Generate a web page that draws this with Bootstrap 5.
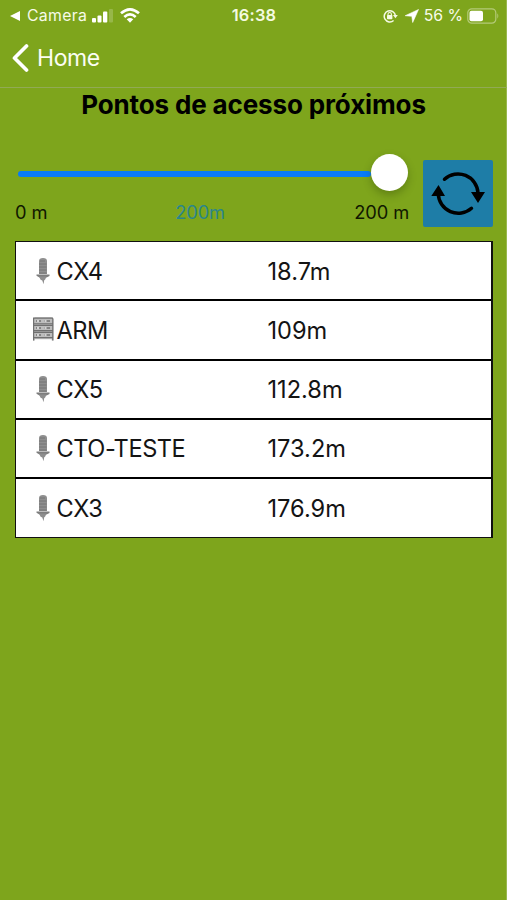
<!DOCTYPE html>
<html lang="pt">
<head>
<meta charset="utf-8">
<meta name="viewport" content="width=device-width, initial-scale=1">
<title>Pontos de acesso próximos</title>
<link href="https://cdn.jsdelivr.net/npm/bootstrap@5.3.0/dist/css/bootstrap.min.css" rel="stylesheet">
<style>
body{background:#7ea51c;font-family:Inter,"Liberation Sans",sans-serif;color:#000;height:900px;overflow:hidden;box-shadow:inset -1px 0 #98b74e}
svg{display:block;flex:none}
.status{height:30px;padding:0 8px 0 9px;color:#f7fbe9;font-size:15.8px;line-height:30px;display:grid;grid-template-columns:1fr auto 1fr}
.status .cam{letter-spacing:.3px;margin-left:7px}
.status .clock{font-weight:600;font-size:16.4px;letter-spacing:.2px;color:#f4fae0}
.status .cam,.status .pct{padding-top:1px}
.topnav{height:58px;border-bottom:1px solid #91aa55;padding:0 0 1px 11px;color:#fbfdf3;font-size:23px}
.topnav a{letter-spacing:-.45px;margin-left:8px;line-height:1}
h1{font-size:26px;font-weight:700;line-height:33px;letter-spacing:-.13px;margin:0;height:72px;white-space:nowrap}
.controls{padding:0 14px 0 15px;height:67px}
.slider{width:395px;margin-right:14px}
.rail{height:27px;padding-left:3px}
.rail-line{height:6px;background:#087cf8;border-radius:3px}
.knob{width:37px;height:37px;flex:none;border-radius:50%;background:#fff;box-shadow:0 4px 9px rgba(30,45,0,.3);margin:-3px 1px 0 0}
.scale{font-size:18.3px;line-height:22px;margin-top:14px;letter-spacing:-.1px;color:#101800;display:grid;grid-template-columns:1fr auto 1fr}
.scale .current{color:#2a868c;margin-left:-24px}
.refresh{width:70px;height:67px;background:#1e7da7;border:0;border-radius:2px;padding:0}
.points{margin:14px 14px 0 15px;border:1px solid #101010;border-right-width:2px;background:#fff}
.point{height:59.25px;border-bottom:2px solid #000;padding:1px 0 0 14.500px;font-size:23.6px;line-height:1;color:#141414}
.point:first-child{padding-top:2px}
.point:last-child{border-bottom:0;height:58.25px}
.point .name{width:237px}
.point .label{margin-left:2px;letter-spacing:-.45px}
</style>
<script src="https://cdn.jsdelivr.net/npm/bootstrap@5.3.0/dist/js/bootstrap.bundle.min.js"></script>
</head>
<body>
<svg width="0" height="0" class="position-absolute" aria-hidden="true">
<defs>
<symbol id="closure" viewBox="0 2 24 28">
<path d="M8 18V5q0-3 4-3T16 5v13z" fill="#8f8f8f"/>
<path d="M9 5h5M8 8h7.500M8 11h7.500M8 14h7.500M8 17h7.500" stroke="#727272" stroke-width=".9"/>
<path d="M5.500 18.500h13v1.500l-3 1.500H8.500l-3-1.700z" fill="#7d7d7d"/>
<path d="M8 20.500h7.500l-1.300 3-1 .7-.7 4-1.200-3.800-1.700-.7z" fill="#8d8d8d"/>
</symbol>
<symbol id="rack" viewBox="0 0 24 28">
<path d="M2 2.500l2-1.300h16.500l2 1.300v22h-1.800v-1.300H3.800v1.300H2z" fill="#bdbdbd"/>
<path d="M2.600 24.500V2.500M21.800 2.500v22M2 2.200h20M2 7.800h20M2 9.500h20M2 14.600h20M2 16.300h20M2 21.700h20" stroke="#707070" stroke-width="1.200" fill="none"/>
<path d="M5 5h5m3 0h6M5 12h5m3 0h6M5 19h5m3 0h6" stroke="#858585" stroke-width="2.200"/>
<path d="M6 5h2m5.500 0h2M6 12h2m5.500 0h2M6 19h2m5.500 0h2" stroke="#ececec" stroke-width="1.500"/>
</symbol>
</defs>
</svg>

<div class="status">
<div class="d-flex align-items-center">
<svg width="11" height="10" viewBox="0 0 11 10"><path d="M1 5L11 0v10z" fill="#fff"/></svg>
<span class="cam">Camera</span>
<svg style="margin-left:4px" width="23" height="14" viewBox="0 0 23 14"><g fill="#fff"><rect x="1" y="9" width="4" height="4.500" rx="1"/><rect x="6.500" y="6.500" width="4" height="7" rx="1"/><rect x="12" y="2.500" width="4.300" height="11" rx="1"/><rect x="18" y="0" width="4" height="13.500" rx="1" opacity=".2"/></g></svg>
<svg style="margin-left:6px" width="20" height="15" viewBox="0 0 20 15" fill="none" stroke="#fff" stroke-width="2.700"><path d="M1 5.300Q10-2.500 19 5.300M4.300 8.900Q10 3.900 15.700 8.900"/><path d="M6.700 11.300Q10 8.500 13.300 11.300L10 14.700z" fill="#fff" stroke="none"/></svg>
</div>
<div class="clock">16:38</div>
<div class="d-flex align-items-center justify-content-end">
<svg width="15" height="14" viewBox="0 0 15 14"><path d="M10.600 11.500A5.600 5.600 0 1 1 12.400 6.700" fill="none" stroke="#f5fae6" stroke-width="1.500"/><path d="M10 6h4.800l-2.400 3.300z" fill="#f5fae6"/><rect x="4" y="6" width="5.400" height="4.300" rx=".7" fill="#f5fae6"/><path d="M5 6.500V5.200a1.700 1.700 0 0 1 3.400 0v1.300" fill="none" stroke="#f5fae6" stroke-width="1.100"/></svg>
<svg style="margin-left:7px" width="14" height="14" viewBox="0 0 14 14"><path d="M13.500.5L7.700 13.500l-.9-6.200L.2 6.700z" fill="#fff" stroke="#fff" stroke-width=".6" stroke-linejoin="round"/></svg>
<span class="pct" style="margin-left:5px">56 %</span>
<svg style="margin-left:4px" width="32" height="16" viewBox="0 0 32 16"><rect x=".8" y=".8" width="28" height="14.400" rx="4" fill="none" stroke="#b4ca78" stroke-width="1.200"/><rect x="2.500" y="2.800" width="13.500" height="10.400" rx="2" fill="#fff"/><path d="M30.300 5.300q2 2.700 0 5.400z" fill="#b4ca78"/></svg>
</div>
</div>

<nav class="topnav d-flex align-items-center">
<svg width="18" height="28" viewBox="0 0 18 28"><path d="M15.500 2L3.500 14l12 12" fill="none" stroke="#fff" stroke-width="3.700" stroke-linecap="round" stroke-linejoin="round"/></svg>
<a href="#" class="text-reset text-decoration-none">Home</a>
</nav>

<main>
<h1 class="text-center">Pontos de acesso próximos</h1>
<div class="controls d-flex">
<div class="slider">
<div class="rail d-flex align-items-center"><div class="rail-line flex-grow-1"></div><div class="knob"></div></div>
<div class="scale"><span>0 m</span><span class="current">200m</span><span class="text-end">200 m</span></div>
</div>
<button class="refresh d-flex align-items-center justify-content-start" type="button" aria-label="Atualizar">
<svg width="69" height="67" viewBox="0 0 69 67"><path d="M21.500 19.200A20 20 0 0 1 55 33M48.500 48.300A20 20 0 0 1 15.300 34" fill="none" stroke="#000" stroke-width="3.500" stroke-linecap="round"/><path d="M48 32h14l-7 11zM8.300 36h13.700L15.500 25z"/></svg>
</button>
</div>

<div class="points">
<div class="point d-flex align-items-center"><div class="name d-flex align-items-center"><svg width="24" height="28"><use href="#closure"/></svg><span class="label">CX4</span></div><span>18.7m</span></div>
<div class="point d-flex align-items-center"><div class="name d-flex align-items-center"><svg width="24" height="28"><use href="#rack"/></svg><span class="label">ARM</span></div><span>109m</span></div>
<div class="point d-flex align-items-center"><div class="name d-flex align-items-center"><svg width="24" height="28"><use href="#closure"/></svg><span class="label">CX5</span></div><span>112.8m</span></div>
<div class="point d-flex align-items-center"><div class="name d-flex align-items-center"><svg width="24" height="28"><use href="#closure"/></svg><span class="label">CTO-TESTE</span></div><span>173.2m</span></div>
<div class="point d-flex align-items-center"><div class="name d-flex align-items-center"><svg width="24" height="28"><use href="#closure"/></svg><span class="label">CX3</span></div><span>176.9m</span></div>
</div>
</main>
</body>
</html>
